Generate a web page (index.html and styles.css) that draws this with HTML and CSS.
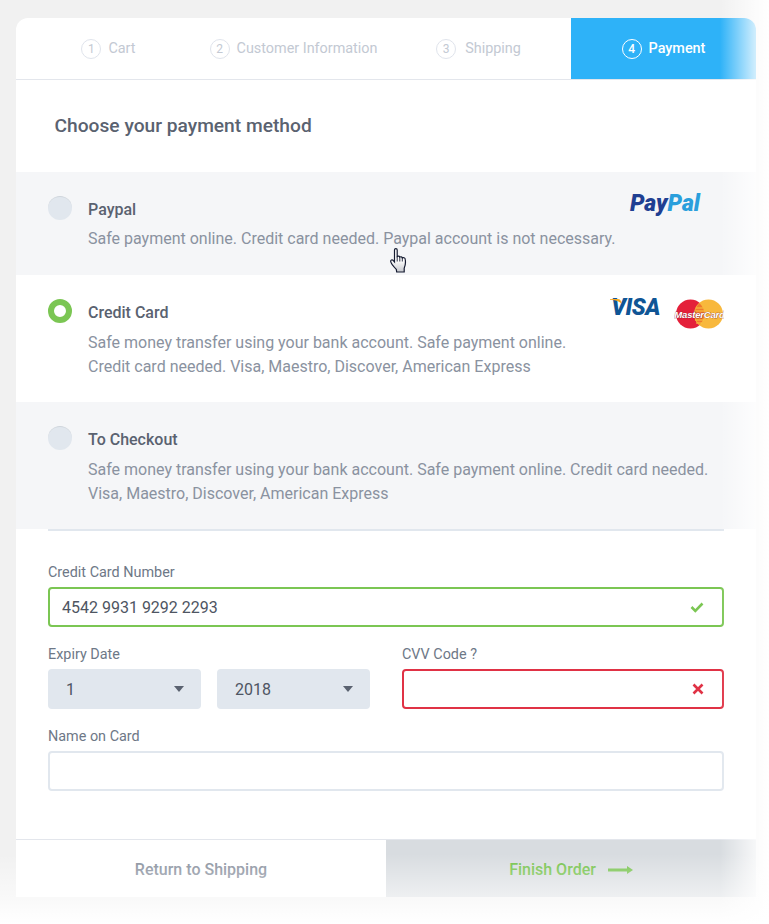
FILE: index.html
```html
<!DOCTYPE html>
<html lang="en">
<head>
    <meta charset="UTF-8">
    <meta name="viewport" content="width=device-width, initial-scale=1.0">
    <title>Payment</title>
    <link rel="stylesheet" href="styles.css">
</head>
<body>

    <div class="card">
        <div class="steps">
            <div class="step"><span class="step-num">1</span>Cart</div>
            <div class="step"><span class="step-num">2</span>Customer Information</div>
            <div class="step"><span class="step-num">3</span>Shipping</div>
            <div class="step active"><span class="step-num">4</span>Payment</div>
        </div>

        <h2 class="title">Choose your payment method</h2>

        <div class="method shaded">
            <span class="radio"></span>
            <div class="method-body">
                <h3>Paypal</h3>
                <p>Safe payment online. Credit card needed. Paypal account is not necessary.</p>
            </div>
            <div class="logo-paypal"><span class="pay">Pay</span><span class="pal">Pal</span></div>
        </div>

        <div class="method two-line">
            <span class="radio checked"></span>
            <div class="method-body">
                <h3>Credit Card</h3>
                <p>Safe money transfer using your bank account. Safe payment online.<br>Credit card needed. Visa, Maestro, Discover, American Express</p>
            </div>
            <div class="logo-cards">
                <div class="logo-visa">VISA
                    <svg class="visa-flick" width="12" height="6" viewBox="0 0 12 6"><path d="M0 0h8c2 0 3 1 3.500 4.500C9 2.500 5 .8 0 .8z" fill="#f7a823"/></svg>
                </div>
                <svg class="logo-mc" width="50" height="30" viewBox="0 0 50 30">
                    <circle cx="16.500" cy="15" r="14.500" fill="#e4203a"/>
                    <circle cx="34.500" cy="15" r="14.500" fill="#f8b83c"/>
                    <path d="M25.500 4.300c-3 2.600-4.800 6.300-4.800 10.700s1.800 8.100 4.800 10.700c3-2.600 4.800-6.300 4.800-10.700s-1.800-8.100-4.800-10.700z" fill="#f0792c"/>
                    <path d="M22 9h7M21 12h9M21 21h9M22 24h6" stroke="#f8c93c" stroke-width="1" fill="none"/>
                    <text x="25.500" y="19" text-anchor="middle" class="mc-text">MasterCard</text>
                </svg>
            </div>
        </div>

        <div class="method shaded two-line">
            <span class="radio"></span>
            <div class="method-body">
                <h3>To Checkout</h3>
                <p>Safe money transfer using your bank account. Safe payment online. Credit card needed.<br>Visa, Maestro, Discover, American Express</p>
            </div>
        </div>

        <form class="form">
            <div class="field">
                <label for="number">Credit Card Number</label>
                <div class="input-wrap">
                    <input type="text" id="number" class="input valid" value="4542 9931 9292 2293">
                    <svg class="input-icon" width="14" height="12" viewBox="0 0 14 12"><path d="M1.500 6l3.800 3.800L12.500 2.500" fill="none" stroke="#7bc653" stroke-width="2.600"/></svg>
                </div>
            </div>
            <div class="form-row">
                <div class="field">
                    <label>Expiry Date</label>
                    <div class="selects">
                        <div class="select">1</div>
                        <div class="select">2018</div>
                    </div>
                </div>
                <div class="field">
                    <label for="cvv">CVV Code ?</label>
                    <div class="input-wrap">
                        <input type="text" id="cvv" class="input invalid">
                        <svg class="input-icon" width="12" height="12" viewBox="0 0 12 12"><path d="M1.500 1.500l9 9M10.500 1.500l-9 9" fill="none" stroke="#e03245" stroke-width="2.600"/></svg>
                    </div>
                </div>
            </div>
            <div class="field">
                <label for="name">Name on Card</label>
                <input type="text" id="name" class="input">
            </div>
        </form>

        <div class="footer">
            <a class="back">Return to Shipping</a>
            <a class="finish">Finish Order
                <svg width="25" height="8" viewBox="0 0 25 8"><path d="M0 2.500h19V0l6 4-6 4V5.500H0z" fill="#74c24a"/></svg>
            </a>
        </div>
    </div>

    <svg class="cursor" width="18" height="25" viewBox="0 0 18 25">
        <defs>
            <linearGradient id="hand" x1="0" y1="0" x2="0" y2="1">
                <stop offset=".5" stop-color="#fff"/>
                <stop offset="1" stop-color="#c4c6cc"/>
            </linearGradient>
        </defs>
        <path d="M4.500 2c0-1.800 2.700-1.800 2.700 0v6.500c1.200-.8 2.300-.4 2.600.6 1-.7 2.200-.3 2.500.8 1.100-.6 2.700-.1 2.900 1.300.5 3 .2 6.500-1 9v3.800H6.700l-.4-2.700C4.200 19.200 1 15.500.700 13.500c-.2-1.500 1.300-2.200 2.400-1.200l1.400 1.600z" fill="url(#hand)" stroke="#141a30" stroke-width="1.200"/>
        <path d="M7.200 8.500v5M9.800 9.100v4.400M12.300 9.900v3.600" fill="none" stroke="#141a30" stroke-width=".9"/>
    </svg>

    <div class="fade-right"></div>
    <div class="fade-bottom"></div>

</body>
</html>
```

FILE: styles.css
```css
* {
  box-sizing: border-box;
}

html, body {
  height: 924px;
}

body {
  margin: 0;
  padding: 18px 13px 27px 16px;
  background: #f1f1f1;
  font-family: Roboto, 'Liberation Sans', sans-serif;
  overflow: hidden;
  position: relative;
}

.card {
  height: 879px;
  background: #fff;
  border-radius: 12px 12px 0 0;
  overflow: hidden;
  display: flex;
  flex-direction: column;
}

.steps {
  display: grid;
  grid-template-columns: repeat(4, 1fr);
  height: 62px;
  border-bottom: 1px solid #e3e6ec;
}

.step {
  display: flex;
  align-items: center;
  justify-content: center;
  font-size: 14.400px;
  line-height: 20px;
  font-weight: 400;
  color: #c3c9d3;
}

.step-num {
  width: 20px;
  height: 20px;
  margin-right: 7px;
  border: 1px solid #e0e4ec;
  border-radius: 50%;
  display: flex;
  align-items: center;
  justify-content: center;
  font-size: 12px;
}

.step:nth-child(3) .step-num {
  margin-right: 9px;
}

.step.active {
  background: #2eb2f8;
  color: #fff;
  font-weight: 500;
}

.step.active .step-num {
  border-color: #fff;
}

.title {
  margin: 0;
  padding: 33px 38.500px 34px;
  height: 92px;
  font-size: 19.200px;
  line-height: 25px;
  font-weight: 500;
  color: #5a6270;
}

.method {
  display: flex;
  padding: 24px 32px;
  position: relative;
}

.method.two-line {
  padding-bottom: 23px;
}

.method.shaded {
  background: #f5f6f8;
}

.radio {
  flex: none;
  width: 24px;
  height: 24px;
  margin-right: 16px;
  border-radius: 50%;
  background: #e1e7ee;
  border-top: 1px solid #cfd5dc;
}

.radio.checked {
  background: #fff;
  border: 6.500px solid #7bc653;
}

.method-body h3 {
  margin: 2px 0 5px;
  font-size: 16px;
  line-height: 24px;
  font-weight: 500;
  color: #5a6270;
}

.two-line h3 {
  margin-bottom: 6px;
}

.method-body p {
  margin: 0;
  font-size: 16px;
  line-height: 24px;
  color: #8a92a0;
}

.logo-paypal {
  position: absolute;
  top: 19px;
  right: 56px;
  font-size: 23px;
  line-height: 26px;
  font-weight: 900;
  font-style: italic;
}

.pay {
  color: #1f3f92;
}

.pal {
  color: #2a9fdc;
}

.logo-cards {
  position: absolute;
  top: 21px;
  right: 32px;
  display: flex;
  align-items: flex-start;
  gap: 14px;
}

.logo-visa {
  position: relative;
  font-size: 23px;
  line-height: 24px;
  font-weight: 900;
  font-style: italic;
  color: #0f5595;
  letter-spacing: -.5px;
}

.visa-flick {
  position: absolute;
  left: -1px;
  top: 3px;
}

.logo-mc {
  margin-top: 3px;
}

.mc-text {
  font-family: 'Liberation Sans', sans-serif;
  font-size: 9.500px;
  font-weight: 700;
  font-style: italic;
  fill: #fff;
  stroke: #7a2030;
  stroke-width: .5px;
  paint-order: stroke;
  letter-spacing: -.2px;
}

.form {
  margin: 0 32px;
  padding-top: 31px;
  border-top: 2px solid #e1e7ee;
  flex: 1;
}

.form-row {
  display: grid;
  grid-template-columns: 1fr 1fr;
  gap: 32px;
}

.field {
  margin-bottom: 17px;
}

.field label {
  display: block;
  padding-top: 1px;
  margin-bottom: 4px;
  font-size: 14.400px;
  line-height: 20px;
  color: #6e7887;
}

.input-wrap {
  position: relative;
}

.input {
  display: block;
  width: 100%;
  height: 40px;
  padding: 0 12px;
  border: 2px solid #e1e7ee;
  border-radius: 4px;
  background: #fff;
  font-family: Roboto, sans-serif;
  font-size: 16px;
  color: #4e5562;
  outline: none;
}

.input.valid {
  border-color: #7bc653;
}

.input.invalid {
  border-color: #e03245;
}

.input-icon {
  position: absolute;
  right: 20px;
  top: 14px;
}

.selects {
  display: grid;
  grid-template-columns: 1fr 1fr;
  gap: 16px;
}

.select {
  position: relative;
  height: 40px;
  padding-left: 18px;
  border-radius: 4px;
  background: #e1e7ee;
  font-size: 16px;
  line-height: 41px;
  color: #4e5562;
}

.select::after {
  content: "";
  position: absolute;
  right: 17px;
  top: 17px;
  border-style: solid;
  border-width: 6px 5px 0;
  border-color: #5a6270 transparent transparent;
}

.footer {
  display: grid;
  grid-template-columns: 1fr 1fr;
  height: 58px;
  border-top: 1px solid #e3e6ec;
  font-size: 16px;
  line-height: 24px;
  font-weight: 500;
}

.back, .finish {
  display: flex;
  align-items: center;
  justify-content: center;
  padding-top: 2px;
}

.back {
  color: #868e9b;
}

.finish {
  gap: 12px;
  background: #d8dce0;
  color: #6fc044;
}

.cursor {
  position: absolute;
  left: 390px;
  top: 248px;
}

.fade-right {
  position: absolute;
  top: 0;
  right: 0;
  width: 49px;
  height: 924px;
  background: linear-gradient(to right, rgba(255, 255, 255, 0), rgba(255, 255, 255, .75) 70%, #fff);
}

.fade-bottom {
  position: absolute;
  left: 0;
  right: 0;
  bottom: 0;
  height: 70px;
  background: linear-gradient(to bottom, rgba(255, 255, 255, 0), rgba(255, 255, 255, .55) 60%, #fff);
}
```
